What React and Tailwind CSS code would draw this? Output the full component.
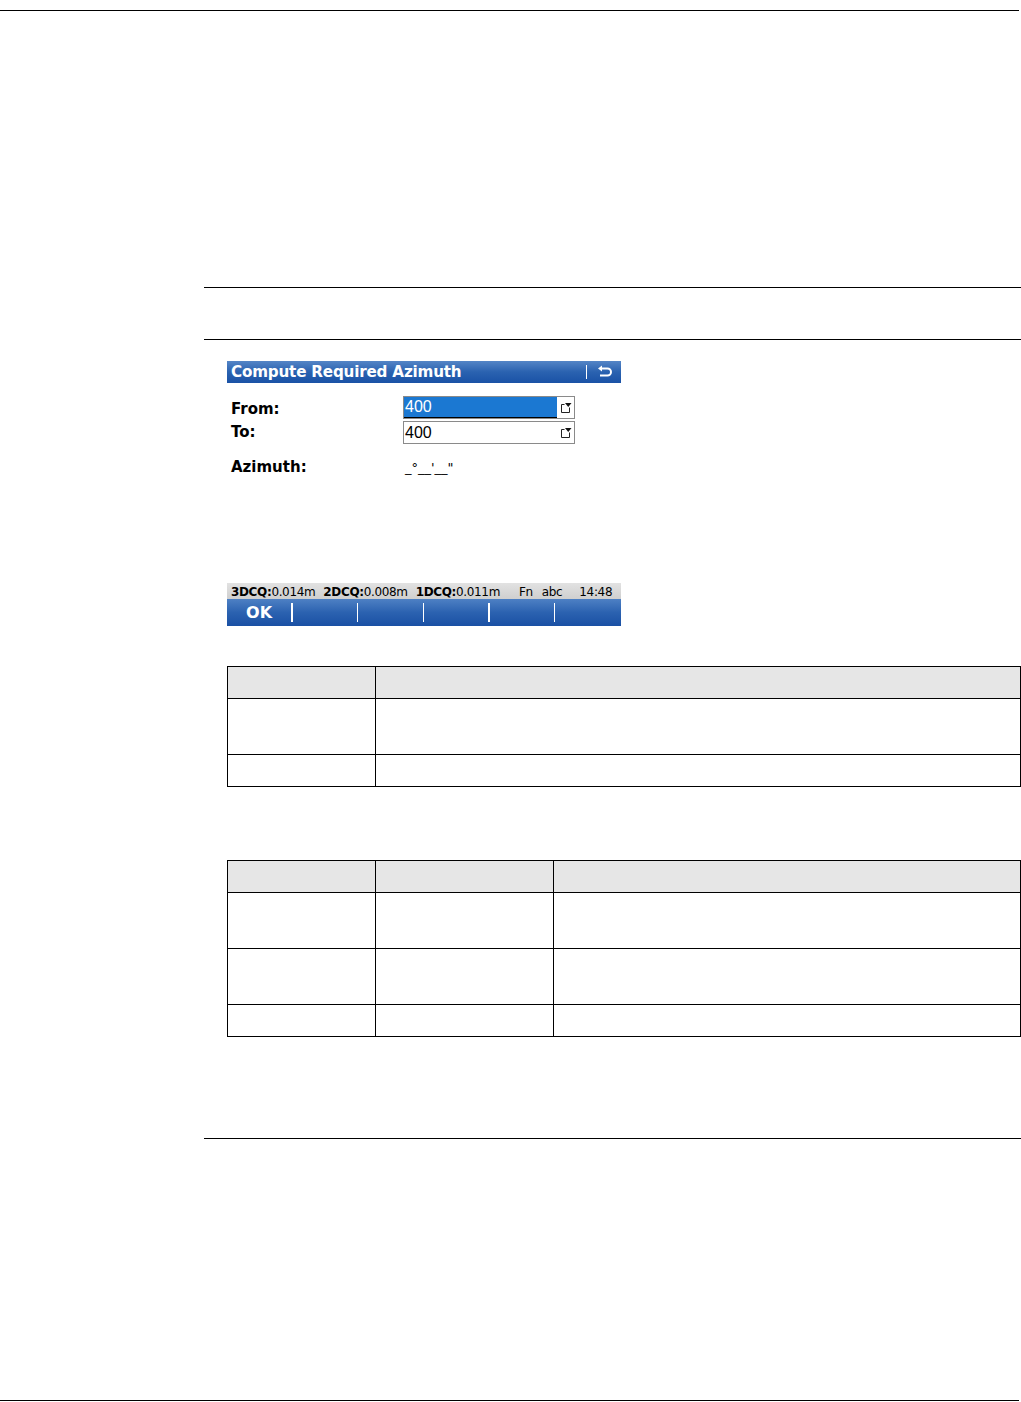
import React from "react";

// Dropdown marker shown at the right end of a choice field
function ListIcon() {
  return (
    <svg width="12" height="12" viewBox="0 0 12 12" className="shrink-0">
      <path d="M1.5 2.5v8h8v-5" fill="none" stroke="#222" strokeWidth="1" />
      <path d="M1.5 2.5h3" fill="none" stroke="#222" strokeWidth="1" />
      <path d="M5 1h6.5l-3.25 4z" fill="#111" />
    </svg>
  );
}

function BackIcon() {
  return (
    <svg width="16" height="14" viewBox="0 0 16 14">
      <path d="M4 3.5h6.5a3.5 3.5 0 0 1 0 7H3" fill="none" stroke="#fff" strokeWidth="2" />
      <path d="M1 3.5 5 0.5v6z" fill="#fff" />
    </svg>
  );
}

function Field({ value, selected }) {
  return (
    <div className="flex items-center w-[172px] h-[23px] border border-[#8a8a8a] bg-white">
      <div
        className={
          selected
            ? "flex-1 h-full flex items-center pl-[1px] bg-[#1b78d2] text-white border-b border-black"
            : "flex-1 h-full flex items-center pl-[1px] text-black"
        }
      >
        <span className="text-[16px] leading-none font-['Liberation_Sans',sans-serif]">{value}</span>
      </div>
      <div className="w-[17px] h-full flex items-center justify-center">
        <ListIcon />
      </div>
    </div>
  );
}

function Screen() {
  const keys = ["OK", "", "", "", "", ""];
  return (
    <div className="ml-[23px] mt-[21px] w-[394px] font-['DejaVu_Sans',sans-serif]">
      {/* title bar */}
      <div className="h-[22px] flex items-center bg-gradient-to-b from-[#5485c6] via-[#2a62b0] to-[#1a52a6] text-white">
        <span className="pl-[4px] pt-[2px] text-[15.2px] font-bold leading-none tracking-[-0.2px] flex-1">
          Compute Required Azimuth
        </span>
        <div className="w-px h-[14px] bg-white mr-[10px]" />
        <div className="mr-[8px] flex items-center">
          <BackIcon />
        </div>
      </div>

      {/* body */}
      <div className="h-[200px] bg-white pt-[13px] pl-[4px]">
        <div className="flex items-center h-[23px]">
          <span className="w-[172px] text-[15px] font-bold pt-[3px]">From:</span>
          <Field value="400" selected />
        </div>
        <div className="flex items-center h-[23px] mt-[2px]">
          <span className="w-[172px] text-[15px] font-bold">To:</span>
          <Field value="400" />
        </div>
        <div className="flex items-center h-[22px] mt-[12px]">
          <span className="w-[174px] text-[15px] font-bold">Azimuth:</span>
          <span className="text-[13px] leading-none">_°__'__"</span>
        </div>
      </div>

      {/* status line */}
      <div className="h-[16px] flex items-center bg-gradient-to-b from-[#e2e2e2] to-[#cfcfcf] pl-[4px] pt-px text-[12px] leading-none text-black tracking-[-0.35px]">
        <b>3DCQ:</b>
        <span>0.014m</span>
        <b className="ml-[8px]">2DCQ:</b>
        <span>0.008m</span>
        <b className="ml-[8px]">1DCQ:</b>
        <span>0.011m</span>
        <span className="ml-[19px]">Fn</span>
        <span className="ml-[9px]">abc</span>
        <span className="ml-[17px]">14:48</span>
      </div>

      {/* softkeys */}
      <div className="h-[27px] flex bg-gradient-to-b from-[#4d80c4] via-[#2b62b0] to-[#1a50a4]">
        {keys.map((k, i) => (
          <div key={i} className="flex-1 flex items-center">
            <span className="flex-1 text-center text-white text-[16px] font-bold leading-none">{k}</span>
            {i < 5 && <div className="w-[1.5px] h-[19px] bg-white" />}
          </div>
        ))}
      </div>
    </div>
  );
}

function Table({ cols, rows }) {
  return (
    <div className="ml-[23px] w-[794px] border border-black">
      <div className="flex h-[32px] bg-[#e6e6e6] border-b border-black">
        {cols.map((w, i) => (
          <div key={i} className={i < cols.length - 1 ? "border-r border-black" : "flex-1"} style={{ width: w }} />
        ))}
      </div>
      {rows.map((h, r) => (
        <div key={r} className={r < rows.length - 1 ? "flex border-b border-black" : "flex"} style={{ height: h }}>
          {cols.map((w, i) => (
            <div key={i} className={i < cols.length - 1 ? "border-r border-black" : "flex-1"} style={{ width: w }} />
          ))}
        </div>
      ))}
    </div>
  );
}

export default function App() {
  return (
    <div className="w-[1021px] h-[1402px] bg-white flex flex-col">
      <div className="mt-[10px] w-[1019px] h-px bg-black" />
      <div className="pl-[204px] flex flex-col">
        <div className="mt-[276px] h-px bg-black" />
        <div className="mt-[51px] h-px bg-black" />
        <Screen />
        <div className="mt-[40px]">
          <Table cols={[148, null]} rows={[56, 31]} />
        </div>
        <div className="mt-[73px]">
          <Table cols={[148, 178, null]} rows={[56, 56, 31]} />
        </div>
        <div className="mt-[101px] h-px bg-black" />
      </div>
      <div className="mt-auto mb-[1px] w-[1019px] h-px bg-black" />
    </div>
  );
}
